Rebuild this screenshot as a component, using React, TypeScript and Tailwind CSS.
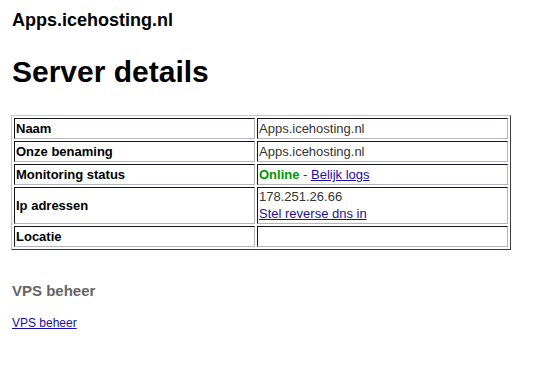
const font = "font-['Liberation_Sans',Arial,sans-serif]";

type Row = {
  label: string;
  value: React.ReactNode;
  tall?: boolean;
};

const rows: Row[] = [
  { label: "Naam", value: "Apps.icehosting.nl" },
  { label: "Onze benaming", value: "Apps.icehosting.nl" },
  {
    label: "Monitoring status",
    value: (
      <>
        <span className="font-bold text-[#009900]">Online</span> -{" "}
        <a href="#" className="text-[#1a0dab] underline">
          Belijk logs
        </a>
      </>
    ),
  },
  {
    label: "Ip adressen",
    tall: true,
    value: (
      <>
        <div className="leading-[16px]">178.251.26.66</div>
        <a href="#" className="block leading-[17px] text-[#1a0dab] underline">
          Stel reverse dns in
        </a>
      </>
    ),
  },
  { label: "Locatie", value: "" },
];

const cell =
  "border border-t-[#141422] border-l-[#141422] border-r-[#b4b4c4] border-b-[#b4b4c4] p-[1px] align-middle";

export default function App() {
  return (
    <div className={`${font} min-h-[378px] bg-white pl-[11px] pt-[10px] text-black`}>
      <h2 className="pl-[1px] text-[18px] font-bold leading-[21px]">Apps.icehosting.nl</h2>

      <h1 className="mt-[24px] pl-[1px] text-[30px] font-bold leading-[34px]">Server details</h1>

      <table className="mt-[26px] w-[500px] table-fixed border-separate border-spacing-[2px] border border-t-[#c4c4cc] border-l-[#c4c4cc] border-r-[#3c3c3c] border-b-[#3c3c3c] text-[13px]">
        <colgroup>
          <col className="w-[241px]" />
          <col />
        </colgroup>
        <tbody>
          {rows.map((row) => (
            <tr key={row.label}>
              <td className={`${cell} font-bold leading-[17px]`}>
                <div className={row.tall ? "flex h-[33px] items-center" : "h-[17px]"}>
                  {row.label}
                </div>
              </td>
              <td className={`${cell} leading-[17px] text-[#333]`}>
                <div className={row.tall ? "h-[33px]" : "h-[17px]"}>{row.value}</div>
              </td>
            </tr>
          ))}
        </tbody>
      </table>

      <h3 className="mt-[32px] pl-[1px] text-[15px] font-bold leading-[18px] text-[#666]">
        VPS beheer
      </h3>

      <a href="#" className="mt-[16px] block w-fit pl-[1px] text-[12px] leading-[14px] text-[#1a0dab] underline">
        VPS beheer
      </a>
    </div>
  );
}
